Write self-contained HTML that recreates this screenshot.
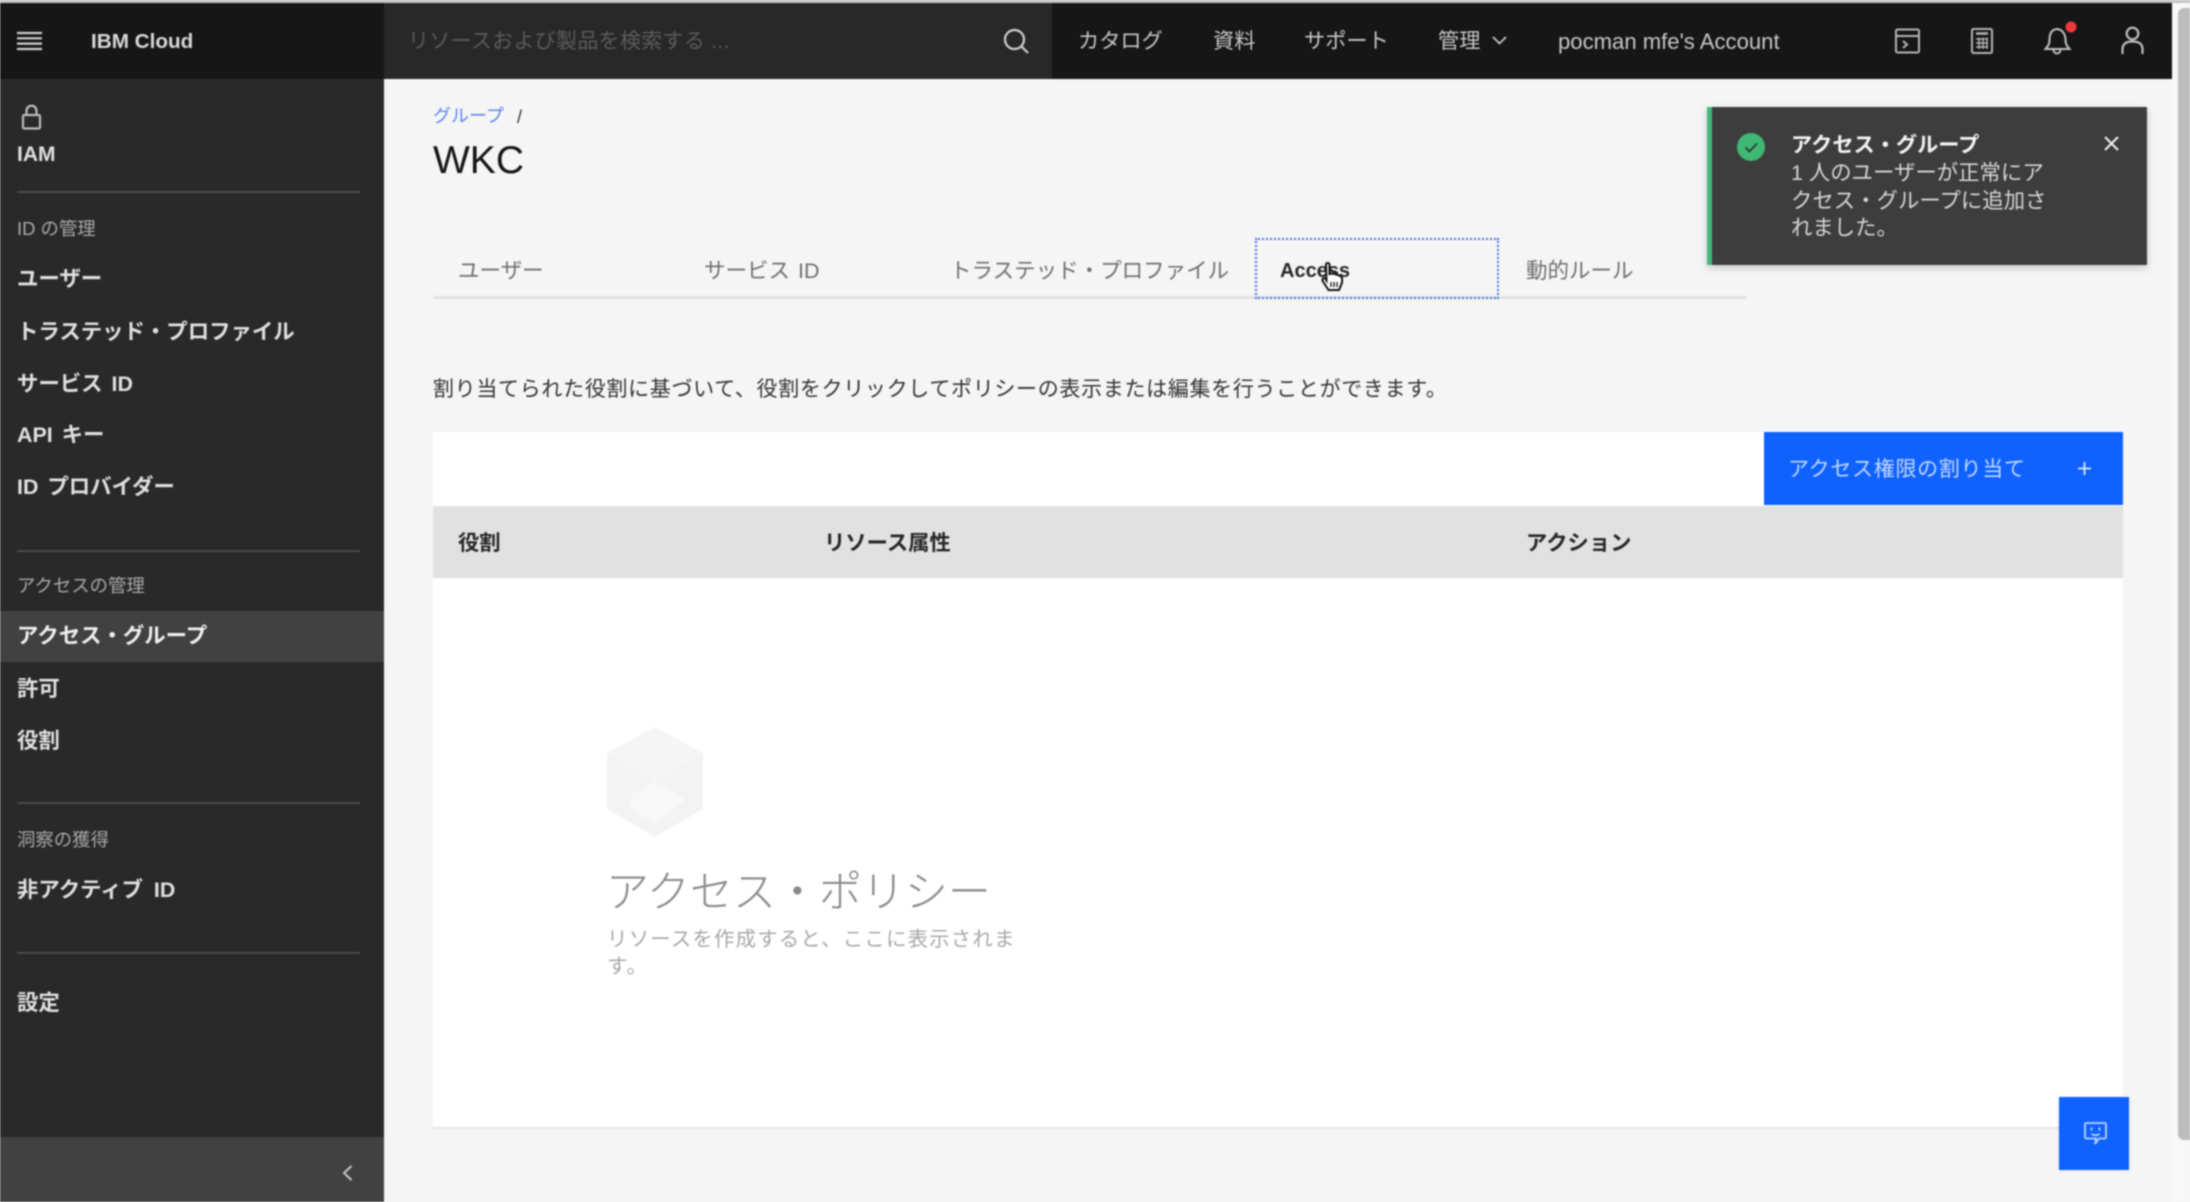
<!DOCTYPE html>
<html lang="ja"><head><meta charset="utf-8"><title>IBM Cloud</title>
<style>
html,body{margin:0;padding:0;width:2190px;height:1202px;overflow:hidden;background:#f5f5f5}
body{position:relative;font-family:"Liberation Sans","Noto Sans CJK JP",sans-serif}
.b{position:absolute}
.t{position:absolute;white-space:nowrap;height:40px;line-height:40px;margin-top:-19.5px}
#blur{position:absolute;left:0;top:0;width:2190px;height:1202px;filter:blur(.8px)}
.nav{color:#e0e0e0;font-size:21.4px;font-weight:700;left:17px;word-spacing:3px}
.lab{color:#a8a8a8;font-size:18.4px;left:17px}
.line{position:absolute;left:17px;width:343px;height:2px;background:#4a4a4a}
.top{color:#c6c6c6;font-size:21.2px}
.tab{color:#6f6f6f;font-size:21.5px;top:270px}
.th{color:#262626;font-size:21.3px;font-weight:700;top:542px}
svg{position:absolute;overflow:visible}
</style></head><body><div id="blur">
<div class="b" style="left:0;top:0;width:2190px;height:3px;background:#c4c4c4"></div>
<div class="b" style="left:2172px;top:3px;width:18px;height:1199px;background:#f8f8f8"></div>
<div class="b" style="left:2178px;top:8px;width:12px;height:1132px;background:#bdbdbd;border-radius:6px 0 0 6px"></div>

<!-- header -->
<div class="b" style="left:0;top:3px;width:2172px;height:76px;background:#161616"></div>
<div class="b" style="left:384px;top:3px;width:668px;height:76px;background:#282828"></div>
<svg style="left:17px;top:31px" width="26" height="20"><path d="M0 2H25M0 7.3H25M0 12.6H25M0 18H25" stroke="#d0d0d0" stroke-width="2.2" fill="none"/></svg>
<div class="t" style="left:91px;top:41px;color:#d8d8d8;font-size:20.7px;font-weight:700">IBM Cloud</div>
<div class="t" style="left:408px;top:41px;color:#5a5a5a;font-size:21px;letter-spacing:.3px">リソースおよび製品を検索する ...</div>
<svg style="left:1002px;top:27px" width="28" height="28" fill="none" stroke="#d0d0d0" stroke-width="2.2"><circle cx="12.5" cy="12.5" r="9.5"/><path d="M19.5 19.5L26 26"/></svg>
<div class="t top" style="left:1078px;top:41px">カタログ</div>
<div class="t top" style="left:1213px;top:41px">資料</div>
<div class="t top" style="left:1304px;top:41px">サポート</div>
<div class="t top" style="left:1438px;top:41px">管理</div>
<svg style="left:1492px;top:36px" width="15" height="9" fill="none" stroke="#c6c6c6" stroke-width="1.8"><path d="M1 1L7.5 7.5L14 1"/></svg>
<div class="t top" style="left:1558px;top:41px;font-size:22.1px">pocman mfe's Account</div>
<svg style="left:1895px;top:28px" width="26" height="26" fill="none" stroke="#b4b4b4" stroke-width="2"><rect x="1" y="1.5" width="23" height="23" rx="1.5"/><path d="M1 8H24"/><path d="M8 13L12 16.5L8 20" stroke-width="2"/></svg>
<svg style="left:1971px;top:28px" width="22" height="26" fill="none" stroke="#b4b4b4" stroke-width="2"><rect x="1" y="1" width="20" height="24" rx="1.5"/><path d="M5 5.5H17" stroke-width="2.5"/><path d="M5 11H17M5 15H17M5 19H17M8 9.5V21M12 9.5V21M16 9.5V21" stroke-width="1.4"/></svg>
<svg style="left:2044px;top:26px" width="28" height="30" fill="none" stroke="#c0c0c0" stroke-width="2"><path d="M13 3C7 3.500 5.500 9 5.500 14C5.500 18 4 20 1.500 23H25.500C23 20 21.500 18 21.500 14C21.500 9 19 3.500 13 3Z"/><path d="M9.500 24C10 28.500 16 28.500 16.500 24"/></svg>
<svg style="left:2065px;top:21px" width="12" height="12"><circle cx="6" cy="6" r="5.500" fill="#f0383e"/></svg>
<svg style="left:2121px;top:26px" width="23" height="30" fill="none" stroke="#c0c0c0" stroke-width="2.2"><circle cx="11.500" cy="7.500" r="5.800"/><path d="M1.500 28V23C1.500 18 5 15.500 11.500 15.500C18 15.500 21.500 18 21.500 23V28"/></svg>

<!-- sidebar -->
<div class="b" style="left:0;top:79px;width:384px;height:1058px;background:#292929"></div>
<div class="b" style="left:0;top:1137px;width:384px;height:65px;background:#414141"></div>
<svg style="left:21px;top:104px" width="21" height="26" fill="none" stroke="#bcbcbc" stroke-width="2.2"><rect x="2" y="11" width="17" height="13.500" rx="1.500"/><path d="M5.500 11V7C5.500 0 15.500 0 15.500 7V11"/></svg>
<div class="t" style="left:17px;top:154px;color:#e0e0e0;font-size:21px;font-weight:700">IAM</div>
<div class="line" style="top:191px"></div>
<div class="t lab" style="top:228px">ID の管理</div>
<div class="t nav" style="top:278px">ユーザー</div>
<div class="t nav" style="top:331px">トラステッド・プロファイル</div>
<div class="t nav" style="top:383px">サービス ID</div>
<div class="t nav" style="top:434px">API キー</div>
<div class="t nav" style="top:486px">ID プロバイダー</div>
<div class="line" style="top:550px"></div>
<div class="t lab" style="top:585px">アクセスの管理</div>
<div class="b" style="left:0;top:611px;width:384px;height:51px;background:#414141"></div>
<div class="t nav" style="top:635px;color:#f0f0f0">アクセス・グループ</div>
<div class="t nav" style="top:688px">許可</div>
<div class="t nav" style="top:740px">役割</div>
<div class="line" style="top:802px"></div>
<div class="t lab" style="top:839px">洞察の獲得</div>
<div class="t nav" style="top:889px;word-spacing:5px">非アクティブ ID</div>
<div class="line" style="top:952px"></div>
<div class="t nav" style="top:1002px">設定</div>
<svg style="left:342px;top:1165px" width="11" height="16" fill="none" stroke="#c6c6c6" stroke-width="2"><path d="M9.500 1L2 8L9.500 15"/></svg>

<!-- main -->
<div class="t" style="left:433px;top:115px;color:#5b86f0;font-size:18px">グループ</div>
<div class="t" style="left:517px;top:116px;color:#333;font-size:18px">/</div>
<div class="t" style="left:433px;top:160px;color:#161616;font-size:39px;height:50px;line-height:50px;margin-top:-24px">WKC</div>

<div class="b" style="left:433px;top:296px;width:1314px;height:3px;background:#e2e2e2"></div>
<div class="t tab" style="left:458px">ユーザー</div>
<div class="t tab" style="left:704px;word-spacing:2px">サービス ID</div>
<div class="t tab" style="left:950px">トラステッド・プロファイル</div>
<div class="t" style="left:1280px;top:270px;color:#262626;font-size:20px;font-weight:700">Access</div>
<div class="t tab" style="left:1526px">動的ルール</div>
<div class="b" style="left:1255px;top:238px;width:240px;height:57px;border:2px dotted #4f70e8;background:transparent"></div>
<svg style="left:1320px;top:262px" width="24" height="30"><path d="M6 2.500C6 .5 9.500 .5 9.500 2.500V12L12 11.500L15 12L18 13L21 14.500C22.500 15.500 22.500 19 21.500 22L19 28H8.500L3 19.500C1.500 17 3.500 15 5.500 17L6.500 18.500Z" fill="#fff" stroke="#111" stroke-width="2"/><path d="M11 20V25M14 20V25M17 20V25" stroke="#111" stroke-width="1.300"/></svg>

<div class="t" style="left:433px;top:389px;color:#333;font-size:21px;letter-spacing:.68px">割り当てられた役割に基づいて、役割をクリックしてポリシーの表示または編集を行うことができます。</div>

<div class="b" style="left:433px;top:432px;width:1690px;height:696px;background:#fff"></div>
<div class="b" style="left:433px;top:1127px;width:1690px;height:2px;background:#e6e6e6"></div>
<div class="b" style="left:433px;top:506px;width:1690px;height:72px;background:#e1e1e1"></div>
<div class="b" style="left:1764px;top:432px;width:359px;height:73px;background:#0f62fe"></div>
<div class="t" style="left:1788px;top:469px;color:#c3d6ff;font-size:21px;letter-spacing:.7px">アクセス権限の割り当て</div>
<svg style="left:2078px;top:462px" width="13" height="13" stroke="#dbe6ff" stroke-width="1.800"><path d="M6.500 0V13M0 6.500H13"/></svg>
<div class="t th" style="left:458px">役割</div>
<div class="t th" style="left:824px">リソース属性</div>
<div class="t th" style="left:1526px">アクション</div>

<svg style="left:606px;top:727px" width="98" height="111"><path d="M49 0L97 26V82L49 110L1 82V26Z" fill="#f3f3f3"/><path d="M1 26L49 55L97 26L49 0Z" fill="#f5f5f5"/><path d="M25 68L49 55L80 72L49 96L25 82Z" fill="#f8f8f8"/></svg>
<div class="t" style="left:606px;top:892px;color:#8a8a8a;font-size:43px;height:60px;line-height:60px;margin-top:-29px;font-weight:300">アクセス・ポリシー</div>
<div class="t" style="left:607px;top:939px;color:#a8a8a8;font-size:20.500px;letter-spacing:1.1px">リソースを作成すると、ここに表示されま</div>
<div class="t" style="left:607px;top:966px;color:#a8a8a8;font-size:20.500px;letter-spacing:1.1px">す。</div>

<!-- toast -->
<div class="b" style="left:1707px;top:107px;width:440px;height:158px;background:#3d3d3d;box-shadow:0 3px 8px rgba(0,0,0,.18)"></div>
<div class="b" style="left:1707px;top:107px;width:5px;height:158px;background:#42b97a"></div>
<svg style="left:1737px;top:133px" width="28" height="28"><circle cx="14" cy="14" r="14" fill="#3fb874"/><path d="M8.500 14.500L12.500 18.500L20 10.500" fill="none" stroke="#26432f" stroke-width="2"/></svg>
<div class="t" style="left:1791px;top:145px;color:#f4f4f4;font-size:21.2px;font-weight:700">アクセス・グループ</div>
<div class="t" style="left:1791px;top:172px;color:#d6d6d6;font-size:21.4px">1 人のユーザーが正常にア</div>
<div class="t" style="left:1791px;top:200px;color:#d6d6d6;font-size:21.4px">クセス・グループに追加さ</div>
<div class="t" style="left:1791px;top:227px;color:#d6d6d6;font-size:21.4px">れました。</div>
<svg style="left:2104px;top:136px" width="15" height="15" fill="none" stroke="#f0f0f0" stroke-width="2"><path d="M1 1L14 14M14 1L1 14"/></svg>

<!-- chat -->
<div class="b" style="left:2059px;top:1097px;width:70px;height:73px;background:#0f62fe;box-shadow:0 0 6px rgba(0,0,0,.06)"></div>
<svg style="left:2084px;top:1122px" width="23" height="24" fill="none" stroke="#bcd2ff" stroke-width="1.800"><path d="M2.500 1H20.500C21.500 1 22 1.500 22 2.500V15C22 16 21.500 16.500 20.500 16.500H15L11 22L12 16.500H2.500C1.500 16.500 1 16 1 15V2.500C1 1.500 1.500 1 2.500 1Z"/><path d="M7.500 5.500V8.500M15.500 5.500V8.500M7.500 12C10 13.500 13 13.500 15.500 12"/></svg>
</div></body></html>
